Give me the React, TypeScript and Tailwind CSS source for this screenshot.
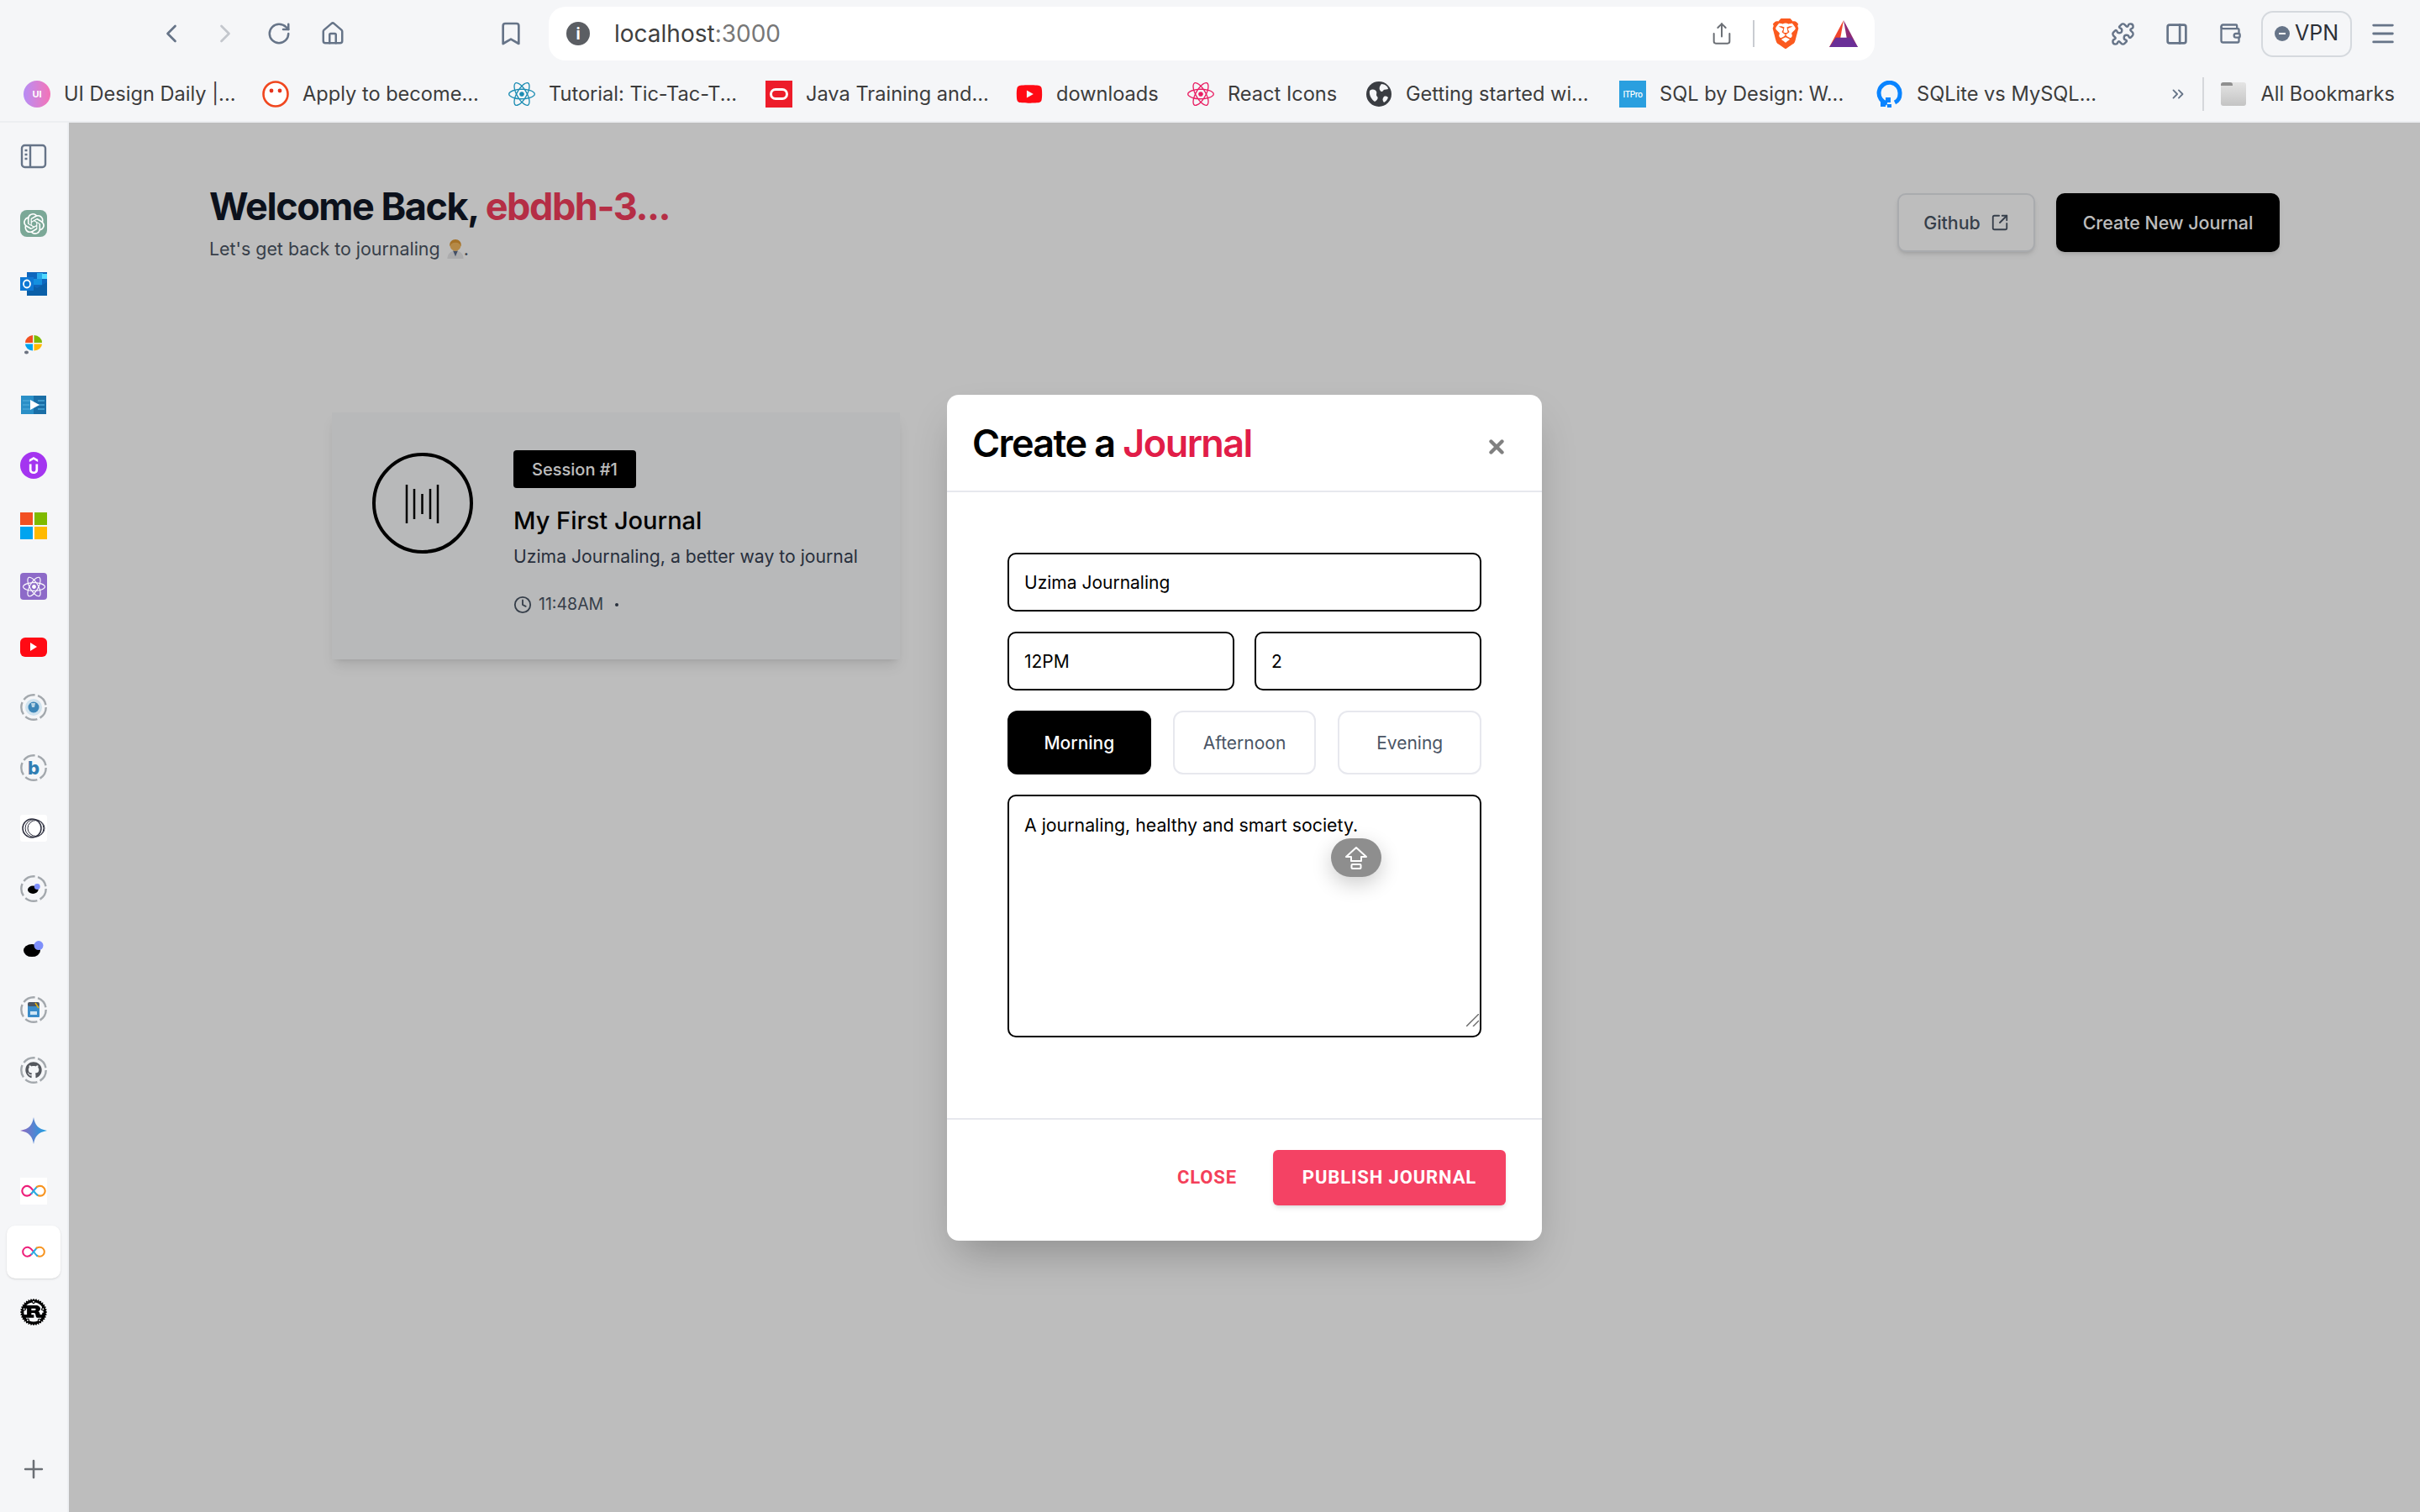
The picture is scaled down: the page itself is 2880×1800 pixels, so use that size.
import { useState, type ReactNode } from 'react';
import {
  Bookmark,
  ChevronLeft,
  ChevronRight,
  ChevronsRight,
  Clock,
  Home,
  Menu,
  PanelRight,
  Plus,
  Puzzle,
  RotateCw,
  Share,
  SquareArrowOutUpRight,
  Wallet,
  X,
} from 'lucide-react';
import { FaGithub, FaReact, FaYoutube } from 'react-icons/fa';
import { SiBrave, SiOpenai, SiRust, SiUdemy } from 'react-icons/si';

function InfinityLogo({ size = 32 }: { size?: number }) {
  return (
    <svg width={size} height={size * 0.55} viewBox="0 0 32 18" fill="none" strokeWidth="2.2" strokeLinecap="round">
      <path d="M16 9C13.5 6 11.5 3 8 3a6 6 0 0 0 0 12c2.5 0 4-1.2 5.5-3" stroke="#ed1e79" />
      <path d="M13.5 12C15.5 9.5 18 6 20 4" stroke="#29abe2" />
      <path d="M20 4c1.2-.7 2.5-1 4-1a6 6 0 0 1 0 12c-1.5 0-2.5-.3-3.500-1" stroke="#f7931e" />
      <path d="M16 9c1.500 2 3 4 4.500 5" stroke="#29abe2" />
    </svg>
  );
}

function DashedRing({ children }: { children: ReactNode }) {
  return (
    <div className="relative flex h-8 w-8 items-center justify-center">
      <svg width="32" height="32" viewBox="0 0 32 32" fill="none" className="absolute inset-0">
        <circle cx="16" cy="16" r="14.7" stroke="#a3a8ad" strokeWidth="2.4" strokeDasharray="15 3.5" />
      </svg>
      {children}
    </div>
  );
}

function BlackDot({ w = 16 }: { w?: number }) {
  return (
    <svg width={w} height={w * 0.8} viewBox="0 0 24 19">
      <ellipse cx="10" cy="11.5" rx="10" ry="7.5" fill="#000" />
      <circle cx="18" cy="5.5" r="5.5" fill="#7e8ffb" />
    </svg>
  );
}

const sidebarIcons: ReactNode[] = [
  <div className="flex h-8 w-8 items-center justify-center rounded-lg bg-[#7ba897] text-white"><SiOpenai size={25} /></div>,
  <svg width="32" height="28" viewBox="0 0 32 28">
    <rect x="8" y="0" width="24" height="20" fill="#0f66bd" />
    <rect x="20" y="1" width="7" height="7" fill="#28a8ea" />
    <rect x="14" y="8" width="12" height="7" fill="#1490df" />
    <rect x="26" y="2" width="6" height="6" fill="#50d9ff" />
    <path d="M8 12l12 7 12-7v16H8z" fill="#0a5fa8" />
    <rect x="0" y="6" width="16" height="16" fill="#0f78d4" />
    <ellipse cx="8" cy="14" rx="4" ry="4.5" fill="none" stroke="#fff" strokeWidth="1.8" />
  </svg>,
  <svg width="22" height="24" viewBox="0 0 22 24">
    <path d="M10 1A10 9 0 0 0 1 10h9z" fill="#f25022" />
    <path d="M11.5 1A10 9 0 0 1 21 10h-9.5z" fill="#7fba00" />
    <path d="M1 11.5a10 8 0 0 0 9 8v-8z" fill="#00a4ef" />
    <path d="M21 11.5a10 8 0 0 1-9.5 8v-8z" fill="#ffb900" />
    <ellipse cx="2.5" cy="21.5" rx="2.5" ry="2" fill="#6b7280" />
  </svg>,
  <svg width="30" height="22" viewBox="0 0 30 22">
    <rect width="30" height="22" fill="#2a8fc7" />
    <rect x="15" width="15" height="22" fill="#1a6ea6" />
    <path d="M2 6h10M2 11h8M2 16h10M20 6h8M20 11h8M20 16h8" stroke="#4aa6d8" strokeWidth="1.5" />
    <path d="M11 5l11 6-11 6z" fill="#fff" />
  </svg>,
  <div className="flex h-8 w-8 items-center justify-center rounded-full bg-[#a435f0] text-white"><SiUdemy size={20} /></div>,
  <div className="grid h-8 w-8 grid-cols-[15px_15px] grid-rows-[15px_15px] gap-[2px]">
    <div className="bg-[#f25022]" />
    <div className="bg-[#7fba00]" />
    <div className="bg-[#00a4ef]" />
    <div className="bg-[#ffb900]" />
  </div>,
  <div className="flex h-8 w-8 items-center justify-center rounded-[4px] bg-[#8d6ac8] text-white"><FaReact size={27} /></div>,
  <div className="flex h-[23px] w-8 items-center justify-center rounded-md bg-[#ff0a14]">
    <svg width="10" height="10" viewBox="0 0 10 10"><path d="M1 0l8 5-8 5z" fill="#fff" /></svg>
  </div>,
  <DashedRing>
    <svg width="20" height="20" viewBox="0 0 20 20">
      <circle cx="10" cy="10" r="10" fill="#cfe2ee" />
      <circle cx="10" cy="10" r="6.5" fill="#3d86b8" />
      <path d="M7 5h5l-1 5H8z" fill="#b7d4e5" />
    </svg>
  </DashedRing>,
  <DashedRing>
    <span className="font-['Inter',sans-serif] text-[22px] leading-none font-extrabold text-[#2f7eb3]">b</span>
  </DashedRing>,
  <svg width="32" height="32" viewBox="0 0 32 32" fill="none" stroke="#2f3140" strokeWidth="1">
    <rect x="0" y="0" width="32" height="32" rx="3" fill="#fff" stroke="none" />
    <circle cx="14" cy="16" r="11" strokeWidth="1.5" />
    <ellipse cx="17" cy="16" rx="11" ry="10.5" />
    <ellipse cx="19" cy="16" rx="10" ry="9.5" />
  </svg>,
  <DashedRing><BlackDot w={15} /></DashedRing>,
  <BlackDot w={24} />,
  <DashedRing>
    <svg width="14" height="18" viewBox="0 0 14 18">
      <rect y="3" width="14" height="15" rx="1" fill="#3a8cc9" />
      <rect x="0" y="0" width="14" height="5" rx="2" fill="#4b5563" />
      <path d="M9 1l4 6" stroke="#eab308" strokeWidth="1.5" />
      <rect x="3" y="11" width="8" height="4" fill="#cfe6f5" />
    </svg>
  </DashedRing>,
  <DashedRing><FaGithub size={20} color="#55585e" /></DashedRing>,
  <svg width="32" height="32" viewBox="0 0 32 32">
    <defs>
      <linearGradient id="gem" x1="0" y1="0" x2="1" y2="0">
        <stop offset="0" stopColor="#9168c0" />
        <stop offset="0.5" stopColor="#5684d1" />
        <stop offset="1" stopColor="#1ba1e3" />
      </linearGradient>
    </defs>
    <path d="M16 0c1.5 9 5 14 16 16-11 2-14.5 7-16 16-1.5-9-5-14-16-16C11 14 14.5 9 16 0z" fill="url(#gem)" />
  </svg>,
  <div className="flex h-8 w-8 items-center justify-center bg-white"><InfinityLogo size={32} /></div>,
  <div className="flex h-[63px] w-16 items-center justify-center rounded-[10px] bg-white shadow-sm"><InfinityLogo size={30} /></div>,
  <SiRust size={32} color="#000" />,
];

const bookmarks: { label: string; width: string; icon: ReactNode }[] = [
  {
    label: 'UI Design Daily |...',
    width: 'w-[204px]',
    icon: (
      <div className="flex h-8 w-8 items-center justify-center rounded-full bg-gradient-to-r from-[#b68cf5] to-[#f472b6] text-[11px] font-bold text-white">UI</div>
    ),
  },
  {
    label: 'Apply to become...',
    width: 'w-[213px]',
    icon: (
      <svg width="32" height="32" viewBox="0 0 32 32">
        <circle cx="16" cy="16" r="14.5" fill="#fff" stroke="#f0471f" strokeWidth="2.6" />
        <circle cx="11" cy="12" r="2.4" fill="#e5341d" />
        <circle cx="21" cy="12" r="2.4" fill="#e5341d" />
      </svg>
    ),
  },
  {
    label: 'Tutorial: Tic-Tac-T...',
    width: 'w-[226px]',
    icon: <FaReact size={32} color="#1d8db3" />,
  },
  {
    label: 'Java Training and...',
    width: 'w-[218px]',
    icon: (
      <div className="flex h-8 w-8 items-center justify-center bg-[#ed1c2a]">
        <div className="h-[14px] w-[22px] rounded-full border-[3px] border-white" />
      </div>
    ),
  },
  {
    label: 'downloads',
    width: 'w-[124px]',
    icon: <FaYoutube size={32} color="#ff0a14" />,
  },
  {
    label: 'React Icons',
    width: 'w-[132px]',
    icon: <FaReact size={32} color="#e91e63" />,
  },
  {
    label: 'Getting started wi...',
    width: 'w-[222px]',
    icon: (
      <svg width="32" height="32" viewBox="0 0 32 32">
        <circle cx="16" cy="16" r="15" fill="#3a3d42" />
        <path d="M5 12c4-3 7-1 8 1s-1 4 1 6-1 5-3 6c-3-2-7-7-6-13zM19 4c4 0 8 3 8 6-3 1-5 0-6 2s-3 1-4-1 0-5 2-7zM22 19c2-1 4 0 5 1-1 3-3 5-5 6-2-2-2-5 0-7z" fill="#f5f6f8" />
      </svg>
    ),
  },
  {
    label: 'SQL by Design: W...',
    width: 'w-[226px]',
    icon: (
      <div className="flex h-8 w-8 items-center justify-center bg-[#2a9fdf] text-[10px] leading-none font-medium tracking-tighter text-white">ITPro</div>
    ),
  },
  {
    label: 'SQLite vs MySQL...',
    width: 'w-[216px]',
    icon: (
      <svg width="32" height="32" viewBox="0 0 32 32" fill="none">
        <path d="M13 27A12.5 12.5 0 1 1 28 16c0 5-3 8.5-6 10" stroke="#0a84ff" strokeWidth="5" />
        <rect x="11" y="20" width="6" height="6" fill="#0a84ff" />
        <rect x="5" y="25" width="6" height="6" fill="#0a84ff" />
        <rect x="13" y="28" width="5" height="4" fill="#0a84ff" />
      </svg>
    ),
  },
];

function ToolbarIcon({ children }: { children: ReactNode }) {
  return <div className="flex h-16 w-16 flex-none items-center justify-center text-[#667488]">{children}</div>;
}

function Field({ value, className }: { value: string; className: string }) {
  return (
    <input
      readOnly
      value={value}
      className={`h-[70px] rounded-[10px] border-2 border-black bg-white px-[18px] pt-[2px] text-[21px] text-black outline-none ${className}`}
    />
  );
}

function Toolbar() {
  return (
    <div className="flex h-20 flex-none items-center pl-[172px]">
      <ToolbarIcon><ChevronLeft size={36} strokeWidth={1.8} /></ToolbarIcon>
      <ToolbarIcon><ChevronRight size={36} strokeWidth={1.8} className="text-[#c3c7cd]" /></ToolbarIcon>
      <ToolbarIcon><RotateCw size={30} strokeWidth={2} /></ToolbarIcon>
      <ToolbarIcon><Home size={30} strokeWidth={2} /></ToolbarIcon>
      <div className="ml-[148px]"><ToolbarIcon><Bookmark size={32} strokeWidth={2} /></ToolbarIcon></div>
      <div className="ml-[13px] flex h-16 w-[1578px] flex-none items-center rounded-[20px] bg-white pr-[19px] pl-[21px]">
        <div className="flex h-[28px] w-[28px] items-center justify-center rounded-full bg-[#5b5e63] text-[19px] leading-none font-bold text-white">i</div>
        <div className="ml-[29px] text-[28px] text-[#3f3f3f]">localhost<span className="text-[#777777]">:3000</span></div>
        <div className="ml-auto flex items-center text-[#6b6f75]">
          <Share size={28} strokeWidth={1.7} />
          <div className="mr-[19px] ml-[23px] h-8 w-[2px] bg-[#c9ccd1]" />
          <SiBrave size={36} color="#fb5a1f" />
          <svg width="36" height="32" viewBox="0 0 36 34" className="ml-[33px]">
            <path d="M18 0L0 34h12z" fill="#f0442c" />
            <path d="M18 0l18 34H24z" fill="#8e2a73" />
            <path d="M8 22h20l8 12H0z" fill="#6a2f97" />
          </svg>
        </div>
      </div>
      <div className="ml-[263px]"><ToolbarIcon><Puzzle size={29} strokeWidth={2} /></ToolbarIcon></div>
      <ToolbarIcon><PanelRight size={29} strokeWidth={2.2} /></ToolbarIcon>
      <ToolbarIcon><Wallet size={28} strokeWidth={2} /></ToolbarIcon>
      <div className="ml-[5px] flex h-[55px] w-[108px] flex-none items-center justify-center gap-[6px] rounded-[14px] border-2 border-[#d5d9de] text-[25px] text-[#2c2f36]">
        <div className="flex h-[18px] w-[18px] items-center justify-center rounded-full bg-[#667488]">
          <div className="h-[2px] w-2 bg-white" />
        </div>
        VPN
      </div>
      <div className="ml-[5px]"><ToolbarIcon><Menu size={34} strokeWidth={2} /></ToolbarIcon></div>
    </div>
  );
}

function BookmarksBar() {
  return (
    <div className="flex h-[66px] flex-none items-center border-b-2 border-[#eceef1] pl-7 text-[23.6px] text-[#3c3c3c]">
      <div className="flex items-center gap-[32px]">
        {bookmarks.map((b) => (
          <div key={b.label} className="flex items-center gap-4">
            <div className="flex h-8 w-8 flex-none items-center justify-center">{b.icon}</div>
            <div className={`whitespace-nowrap ${b.width}`}>{b.label}</div>
          </div>
        ))}
      </div>
      <ChevronsRight size={22} className="ml-auto text-[#667488]" />
      <div className="ml-[18px] h-10 w-[2px] bg-[#d5d7db]" />
      <div className="relative ml-5 h-7 w-[30px] rounded-[3px] bg-gradient-to-b from-[#e4e4e4] to-[#c4c4c4]">
        <div className="absolute top-0 left-0 h-[4px] w-[14px] rounded-t-[3px] bg-[#8f8f8f]" />
      </div>
      <div className="mr-[30px] ml-[17px] whitespace-nowrap">All Bookmarks</div>
    </div>
  );
}

function Sidebar() {
  return (
    <aside className="flex w-[82px] flex-none flex-col items-center border-r-2 border-[#eef0f3] bg-[#f5f6f8] pt-[4px] pb-[34px]">
      <div className="flex h-[72px] items-center justify-center text-[#667488]">
        <svg width="32" height="32" viewBox="0 0 32 32" fill="none" stroke="currentColor" strokeWidth="2.4">
          <rect x="2" y="3" width="28" height="26" rx="3.5" />
          <path d="M12 3v26" />
          <path d="M5.5 9h3M5.5 14h3M5.5 19h3" />
        </svg>
      </div>
      <div className="mt-2 flex flex-col items-center">
        {sidebarIcons.map((icon, i) => (
          <div key={i} className="flex h-[72px] w-full items-center justify-center">{icon}</div>
        ))}
      </div>
      <Plus size={34} strokeWidth={1.8} className="mt-auto text-[#6b6f75]" />
    </aside>
  );
}

function Dashboard() {
  return (
    <div className="px-[167px] pt-[72px] font-['Inter',sans-serif]">
      <div className="flex items-start justify-between">
        <div>
          <h1 className="text-[45px] leading-[56px] font-bold tracking-[-0.032em] text-[#111827]">
            Welcome Back, <span className="text-[#f43f5e]">ebdbh-3...</span>
          </h1>
          <p className="mt-[6px] flex items-center text-[21.4px] leading-[32px] text-[#4b5563]">
            Let's get back to journaling
            <svg width="20" height="23" viewBox="0 0 20 24" className="ml-[8px]">
              <path d="M0 24c0-6 4-10 10-10s10 4 10 10z" fill="#e8e8ea" />
              <path d="M7 14l3 7 3-7z" fill="#5b6b8a" />
              <circle cx="10" cy="8" r="6.5" fill="#f5b95f" />
              <path d="M3 9C2 3 6 0 10 0s8 3 7 9c-1-3-3-5-7-5S4 6 3 9z" fill="#e09a35" />
            </svg>
            .
          </p>
        </div>
        <div className="mt-3 flex gap-[25px]">
          <button className="flex h-[70px] w-[164px] items-center justify-center gap-3 rounded-[10px] border-2 border-gray-200 bg-white text-[21.4px] font-medium text-gray-600 shadow-md">
            Github
            <SquareArrowOutUpRight size={22} strokeWidth={2} />
          </button>
          <button className="h-[70px] w-[266px] rounded-[10px] bg-black text-[21.4px] font-medium text-white shadow-md">
            Create New Journal
          </button>
        </div>
      </div>

      <div className="mt-[179px] ml-[146px] flex h-[294px] w-[676px] items-start gap-[48px] bg-gray-50 pt-[45px] pl-[48px] shadow-lg">
        <svg width="120" height="120" viewBox="0 0 120 120" fill="none" stroke="#000" className="mt-[3px] flex-none">
          <circle cx="60" cy="60" r="58" strokeWidth="4" />
          <path strokeWidth="2.5" d="M41 38v46M50 43v36M59.5 49v24M69 43v36M78 38v46" />
        </svg>
        <div>
          <div className="flex h-[45px] w-[146px] items-center justify-center rounded-[4px] bg-black text-[20px] font-medium text-white">Session #1</div>
          <h2 className="mt-[21px] text-[29px] leading-[36px] font-medium text-black">My First Journal</h2>
          <p className="mt-[8px] text-[21.2px] leading-[32px] text-gray-700">Uzima Journaling, a better way to journal</p>
          <div className="mt-[27px] flex items-center text-[19.5px] text-gray-600">
            <Clock size={22} strokeWidth={2} />
            <span className="ml-2">11:48AM</span>
            <span className="ml-[14px] h-[4px] w-[4px] rounded-full bg-gray-700" />
          </div>
        </div>
      </div>
    </div>
  );
}

function JournalModal() {
  const [period] = useState('Morning');
  return (
    <div className="absolute inset-0 flex items-center justify-center bg-black/26 font-['Inter',sans-serif]">
      <div className="relative w-[708px] rounded-[14px] bg-white shadow-2xl">
        <div className="flex h-[116px] items-center justify-between border-b-2 border-[#e7e8ee] pt-[2px] pr-[41px] pl-[30px]">
          <h3 className="text-[45px] font-semibold tracking-[-0.035em] text-black">
            Create a <span className="text-[#e11d48]">Journal</span>
          </h3>
          <X size={26} strokeWidth={4} className="mt-2 text-[#808080]" />
        </div>

        <div className="flex flex-col gap-6 px-[72px] pt-[72px] pb-[96px]">
          <Field value="Uzima Journaling" className="w-full" />
          <div className="flex gap-6">
            <Field value="12PM" className="w-0 flex-1" />
            <Field value="2" className="w-0 flex-1" />
          </div>
          <div className="flex gap-[26px]">
            {['Morning', 'Afternoon', 'Evening'].map((p) => (
              <button
                key={p}
                className={
                  p === period
                    ? 'h-[76px] flex-1 rounded-[12px] border-2 border-black bg-black pt-[2px] text-[21px] font-medium text-white'
                    : 'h-[76px] flex-1 rounded-[12px] border-2 border-[#e7e8ee] bg-white pt-[2px] text-[21px] text-gray-600'
                }
              >
                {p}
              </button>
            ))}
          </div>
          <textarea
            readOnly
            value="A journaling, healthy and smart society."
            className="block h-[289px] w-full resize-none rounded-[10px] border-2 border-black bg-white px-[18px] py-[19px] text-[21.3px] leading-[30px] text-black outline-none"
          />
        </div>

        <div className="flex items-center justify-end gap-[43px] border-t-2 border-[#e7e8ee] pt-9 pr-[43px] pb-[42px] font-['Roboto',sans-serif]">
          <button className="text-[22px] font-bold tracking-[0.04em] text-[#f4405a]">CLOSE</button>
          <button className="h-[66px] w-[277px] rounded-[6px] bg-[#f44264] text-[22px] font-bold tracking-[0.04em] text-white shadow-md">
            PUBLISH JOURNAL
          </button>
        </div>

        {/* resize grip of the textarea */}
        <svg width="15" height="15" viewBox="0 0 15 15" fill="none" stroke="#666" strokeWidth="1.4" className="absolute top-[737px] left-[618px]">
          <path d="M0 15L15 0M8 15l7-7" />
        </svg>

        {/* caps lock bubble sits over the textarea */}
        <div className="absolute top-[528px] left-[457px] flex h-[46px] w-[60px] items-center justify-center rounded-[23px] bg-[#8e8e8e] shadow-[0_8px_24px_rgba(0,0,0,0.2)]">
          <svg width="28" height="28" viewBox="0 0 28 28" fill="none" stroke="#fff" strokeWidth="2">
            <path d="M14 2L2 13h6v5h12v-5h6z" strokeLinejoin="round" />
            <rect x="8.5" y="22" width="11" height="5" rx="1" />
          </svg>
        </div>
      </div>
    </div>
  );
}

export default function App() {
  return (
    <div className="flex h-screen w-full flex-col overflow-hidden bg-[#f5f6f8] font-['Inter',sans-serif]">
      <Toolbar />
      <BookmarksBar />
      <div className="flex min-h-0 flex-1">
        <Sidebar />
        <main className="relative flex-1 bg-white">
          <Dashboard />
          <JournalModal />
        </main>
      </div>
    </div>
  );
}
